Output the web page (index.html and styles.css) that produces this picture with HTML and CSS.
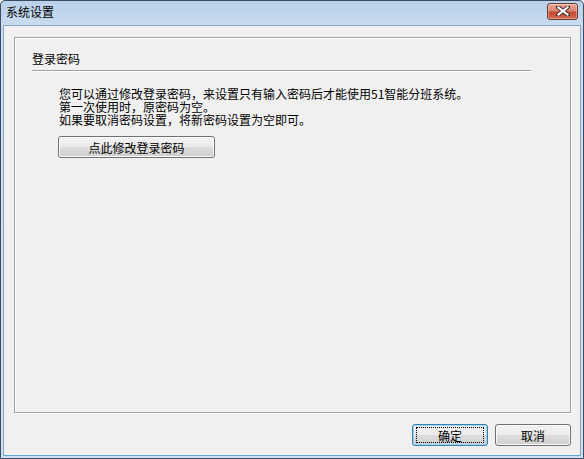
FILE: index.html
```html
<!DOCTYPE html>
<html lang="zh-CN">
<head>
<meta charset="utf-8">
<title>系统设置</title>
<link rel="stylesheet" href="styles.css">
</head>
<body>
<div class="window">
  <div class="titlebar">
    <span class="title">系统设置</span>
    <button class="close" aria-label="关闭">
      <svg width="14" height="10" viewBox="0 0 14 10">
        <path d="M2 1 L12 9 M12 1 L2 9" stroke="#4a2a24" stroke-width="4" stroke-linecap="square"/>
        <path d="M2.5 1.5 L11.5 8.5 M11.5 1.5 L2.5 8.5" stroke="#ffffff" stroke-width="2.2" stroke-linecap="square"/>
      </svg>
    </button>
  </div>
  <div class="client">
    <div class="group">
      <div class="group-label">登录密码</div>
      <div class="separator"></div>
      <div class="desc">
        <p>您可以通过修改登录密码，来设置只有输入密码后才能使用51智能分班系统。</p>
        <p>第一次使用时，原密码为空。</p>
        <p>如果要取消密码设置，将新密码设置为空即可。</p>
      </div>
      <button class="btn btn-wide">点此修改登录密码</button>
    </div>
    <div class="footer">
      <button class="btn btn-default"><span class="focus">确定</span></button>
      <button class="btn">取消</button>
    </div>
  </div>
</div>
</body>
</html>
```
FILE: styles.css
```css
html, body {
  margin: 0;
  padding: 0;
  background: #f0f0f0;
}
body {
  font-family: "Noto Sans CJK SC", "Liberation Sans", sans-serif;
  font-size: 12px;
  color: #000;
}
.window {
  box-sizing: border-box;
  width: 584px;
  height: 459px;
  border: 1px solid #3c4d62;
  border-radius: 5px 5px 0 0;
  background: linear-gradient(to bottom, #b9d1ea 0px, #c9dbee 24px, #cfe0f2 100%);
  display: flex;
  flex-direction: column;
  padding: 0 2px 2px 2px;
  overflow: hidden;
}
.titlebar {
  height: 24px;
  display: flex;
  align-items: center;
  justify-content: space-between;
  flex: none;
}
.title {
  padding-left: 3px;
  line-height: 12px;
  margin-top: -2px;
}
.close {
  width: 31px;
  height: 17px;
  margin-right: 3px;
  margin-top: -4px;
  padding: 0;
  border: 1px solid #6d3a30;
  border-radius: 3px;
  background: linear-gradient(to bottom, #e8a89a 0%, #d88572 45%, #c54a32 55%, #d06a4f 100%);
  box-shadow: inset 0 0 0 1px rgba(255,255,255,0.35);
  display: flex;
  align-items: center;
  justify-content: center;
}
.client {
  flex: 1;
  background: #f0f0f0;
  border: 1px solid #8ea6c2;
  border-bottom-color: #5fa8d8;
  display: flex;
  flex-direction: column;
  padding: 11px 9px 0 10px;
}
.group {
  flex: 1;
  border: 1px solid #a0a0a0;
  box-shadow: 1px 1px 0 #ffffff, inset 1px 1px 0 #ffffff;
  padding: 15px 0 0 17px;
  display: flex;
  flex-direction: column;
  align-items: flex-start;
}
.group-label {
  line-height: 12px;
}
.separator {
  align-self: stretch;
  margin: 5px 39px 0 0;
  height: 1px;
  background: #a0a0a0;
  border-bottom: 1px solid #ffffff;
}
.desc {
  margin: 15px 0 0 27px;
}
.desc p {
  margin: 0;
  line-height: 13px;
}
.btn {
  font-family: "Noto Sans CJK SC", "Liberation Sans", sans-serif;
  font-size: 12px;
  color: #000;
  height: 22px;
  width: 76px;
  padding: 0;
  border: 1px solid #707070;
  border-radius: 3px;
  background: linear-gradient(to bottom, #f2f2f2 0%, #ebebeb 50%, #dddddd 51%, #cfcfcf 100%);
  box-shadow: inset 0 0 0 1px #fcfcfc;
  display: flex;
  align-items: center;
  justify-content: center;
}
.btn-wide {
  width: 157px;
  margin: 10px 0 0 26px;
}
.footer {
  height: 42px;
  display: flex;
  justify-content: flex-end;
  align-items: flex-start;
  gap: 7px;
  padding-top: 11px;
  box-sizing: border-box;
  flex: none;
}
.btn-default {
  border-color: #3c7fb1;
  box-shadow: inset 0 0 0 1px #9ad6f2;
}
.focus {
  box-sizing: border-box;
  width: 68px;
  height: 16px;
  border: 1px dotted #000;
  display: flex;
  align-items: center;
  justify-content: center;
}
```
